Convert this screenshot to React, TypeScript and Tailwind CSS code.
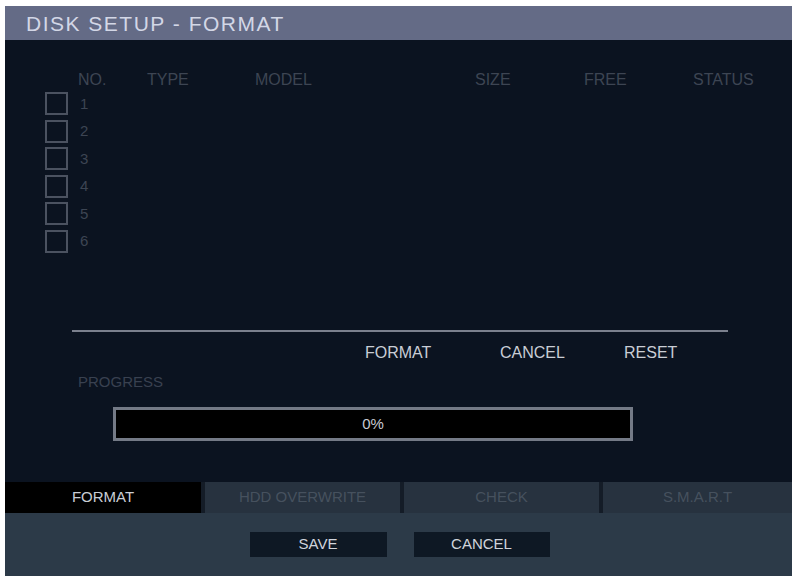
const font = { fontFamily: '"Liberation Sans", Arial, sans-serif' };

const columns = [
  { label: "NO.", w: "w-[69px]" },
  { label: "TYPE", w: "w-[108px]" },
  { label: "MODEL", w: "w-[220px]" },
  { label: "SIZE", w: "w-[109px]" },
  { label: "FREE", w: "w-[109px]" },
  { label: "STATUS", w: "w-[70px]" },
];

const tabs = [
  { label: "FORMAT", active: true, w: "w-[196px]" },
  { label: "HDD OVERWRITE", active: false, w: "w-[195px]" },
  { label: "CHECK", active: false, w: "w-[195px]" },
  { label: "S.M.A.R.T", active: false, w: "flex-1" },
];

export default function App() {
  return (
    <div className="w-[795px] h-[576px] bg-white pt-[6px] pl-[5px] pr-[3px] overflow-hidden" style={font}>
      <div className="flex flex-col h-full">
        {/* title */}
        <div className="h-[34px] bg-[#646b86] flex items-center pl-[21px]">
          <span className="text-[21px] text-[#d3d7e6] tracking-[1.5px] leading-none">DISK SETUP - FORMAT</span>
        </div>

        {/* body */}
        <div className="flex-1 bg-[#0b1320] flex flex-col">
          <div className="flex pl-[73px] pt-[30px] h-[50px] text-[16px] leading-[20px] text-[#3d4553]">
            {columns.map((c) => (
              <div key={c.label} className={c.w}>{c.label}</div>
            ))}
          </div>

          <div className="flex flex-col pl-[40px]">
            {[1, 2, 3, 4, 5, 6].map((n) => (
              <div key={n} className="h-[27.5px] flex items-center">
                <div className="w-[23px] h-[23px] border-2 border-[#4b5260]" />
                <span className="ml-[12px] text-[15px] text-[#3d4553]">{n}</span>
              </div>
            ))}
          </div>

          <div className="ml-[67px] mt-[75px] w-[656px] h-[2px] bg-[#7b808d]" />

          <div className="flex pl-[360px] mt-[11px] h-[20px] items-center text-[16px] text-[#c9cdd5]">
            <span className="w-[135px]">FORMAT</span>
            <span className="w-[124px]">CANCEL</span>
            <span>RESET</span>
          </div>

          <div className="pl-[73px] mt-[9px] text-[15px] leading-[20px] text-[#394150]">PROGRESS</div>

          <div className="ml-[108px] mt-[15px] w-[520px] h-[34px] border-[3px] border-[#747a86] bg-black flex items-center justify-center">
            <span className="text-[15px] text-[#c6cad2]">0%</span>
          </div>

          <div className="flex-1" />
        </div>

        {/* tabs */}
        <div className="h-[31px] flex gap-[4px] bg-[#141c27]">
          {tabs.map((t) => (
            <div
              key={t.label}
              className={`${t.w} flex items-center justify-center text-[15px] ${
                t.active ? "bg-black text-[#c9cdd5]" : "bg-[#27323f] text-[#46515e]"
              }`}
            >
              {t.label}
            </div>
          ))}
        </div>

        {/* footer */}
        <div className="h-[63px] bg-[#2c3a48] flex justify-center gap-[27px] pt-[19px] pl-[2px]">
          <button className="w-[137px] h-[25px] bg-[#0e1824] text-[15px] text-[#d0d4dc]">SAVE</button>
          <button className="w-[136px] h-[25px] bg-[#0e1824] text-[15px] text-[#d0d4dc]">CANCEL</button>
        </div>
      </div>
    </div>
  );
}
